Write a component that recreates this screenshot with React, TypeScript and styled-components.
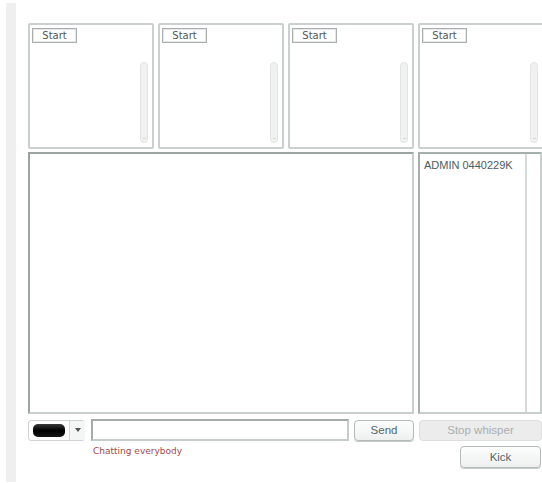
import React from "react";
import styled, { createGlobalStyle } from "styled-components";

const Global = createGlobalStyle`
  html, body { margin: 0; padding: 0; background: #ffffff; overflow: hidden; }
  body { font-family: "Liberation Sans", Arial, sans-serif; }
`;

const Page = styled.div`
  display: flex;
  width: 542px;
  height: 483px;
  overflow: hidden;
`;

const SideStrip = styled.div`
  flex: none;
  width: 10px;
  margin: 3px 0 0 6px;
  height: 479px;
  background: #efefef;
`;

const Main = styled.div`
  flex: none;
  display: flex;
  flex-direction: column;
  padding: 23px 0 0 12px;
  width: 520px;
`;

const CamRow = styled.div`
  display: flex;
  gap: 4px;
`;

const CamPanel = styled.div`
  flex: none;
  box-sizing: border-box;
  width: 126px;
  height: 126px;
  border: 2px solid #c9d0cf;
  border-radius: 2px;
  position: relative;
  background: #fff;
`;

const StartButton = styled.button`
  position: absolute;
  left: 2px;
  top: 3px;
  box-sizing: border-box;
  width: 45px;
  height: 15px;
  padding: 0;
  border: 1px solid #a9aeae;
  box-shadow: inset 0 0 0 1px #e6e6e6;
  background: #fff;
  font-family: "DejaVu Sans", Verdana, sans-serif;
  font-size: 10px;
  color: #555;
  line-height: 13px;
`;

const Track = styled.div`
  position: absolute;
  right: 4px;
  top: 37px;
  width: 8px;
  height: 81px;
  box-sizing: border-box;
  border: 1px solid #e2e4e4;
  border-radius: 4px;
  background: #f1f1f1;
  &::after {
    content: "";
    position: absolute;
    left: 2px;
    bottom: 3px;
    width: 3px;
    height: 1px;
    background: #c9e0b8;
  }
`;

const ChatRow = styled.div`
  display: flex;
  gap: 4px;
  margin-top: 3px;
`;

const ChatBox = styled.div`
  flex: none;
  box-sizing: border-box;
  width: 386px;
  height: 262px;
  border: 2px solid #c8cfcd;
  border-top-color: #9aa5a3;
  border-left-color: #9aa5a3;
  background: #fff;
`;

const UserBox = styled.div`
  flex: none;
  box-sizing: border-box;
  width: 124px;
  height: 262px;
  border: 2px solid #c8cfcd;
  border-top-color: #a5afad;
  border-left-color: #a5afad;
  display: flex;
  background: #fff;
`;

const UserList = styled.div`
  flex: 1;
  padding: 5px 0 0 4px;
  font-size: 11px;
  color: #4c5b60;
`;

const UserTrack = styled.div`
  flex: none;
  width: 13px;
  border-left: 2px solid #d6dbda;
  background: #fff;
`;

const InputRow = styled.div`
  display: flex;
  align-items: center;
  margin-top: 5px;
  height: 22px;
`;

const ColorPicker = styled.div`
  flex: none;
  box-sizing: border-box;
  width: 57px;
  height: 21px;
  border: 1px solid #cfd3d3;
  border-radius: 3px;
  display: flex;
  align-items: center;
  background: #fff;
`;

const Swatch = styled.div`
  flex: none;
  width: 32px;
  height: 13px;
  margin-left: 4px;
  border-radius: 5px;
  background: linear-gradient(#3a3a3a, #000 50%, #151515);
`;

const Arrow = styled.div`
  flex: none;
  margin-left: 4px;
  width: 15px;
  height: 19px;
  border-left: 1px solid #d6d9d9;
  background: #f4f5f5;
  display: flex;
  align-items: center;
  justify-content: center;
  &::before {
    content: "";
    border-left: 3px solid transparent;
    border-right: 3px solid transparent;
    border-top: 4px solid #4a5558;
  }
`;

const TextInput = styled.input`
  flex: none;
  box-sizing: border-box;
  width: 258px;
  height: 22px;
  margin-left: 6px;
  border: 2px solid #c5cccb;
  border-top-color: #a3acab;
  border-left-color: #a3acab;
  background: #fff;
  outline: none;
`;

const Button = styled.button<{ $w: number; $disabled?: boolean }>`
  flex: none;
  box-sizing: border-box;
  width: ${(p) => p.$w}px;
  height: 21px;
  padding: 0;
  border: 1px solid ${(p) => (p.$disabled ? "#dcdfdf" : "#b3bab9")};
  border-radius: 4px;
  background: ${(p) => (p.$disabled ? "#ececec" : "linear-gradient(#fdfdfd, #eef0f0)")};
  box-shadow: ${(p) => (p.$disabled ? "none" : "0 1px 0 #c4cbca")};
  font-family: "Liberation Sans", Arial, sans-serif;
  font-size: 11.5px;
  color: ${(p) => (p.$disabled ? "#a9aeae" : "#55666b")};
`;

const SendButton = styled(Button)`
  margin-left: 5px;
`;

const StopButton = styled(Button)`
  margin-left: 5px;
`;

const FooterRow = styled.div`
  display: flex;
  align-items: flex-start;
  margin-top: 5px;
`;

const Status = styled.div`
  flex: none;
  margin: 0 0 0 65px;
  width: 367px;
  font-family: "DejaVu Sans", Verdana, sans-serif;
  font-size: 9px;
  color: #a14a4a;
`;

const KickButton = styled(Button)`
  height: 22px;
`;

const Camera = () => (
  <CamPanel>
    <StartButton>Start</StartButton>
    <Track />
  </CamPanel>
);

export default function App() {
  return (
    <>
      <Global />
      <Page>
        <SideStrip />
        <Main>
          <CamRow>
            <Camera />
            <Camera />
            <Camera />
            <Camera />
          </CamRow>
          <ChatRow>
            <ChatBox />
            <UserBox>
              <UserList>ADMIN 0440229K</UserList>
              <UserTrack />
            </UserBox>
          </ChatRow>
          <InputRow>
            <ColorPicker>
              <Swatch />
              <Arrow />
            </ColorPicker>
            <TextInput type="text" />
            <SendButton $w={60}>Send</SendButton>
            <StopButton $w={123} $disabled>
              Stop whisper
            </StopButton>
          </InputRow>
          <FooterRow>
            <Status>Chatting everybody</Status>
            <KickButton $w={81}>Kick</KickButton>
          </FooterRow>
        </Main>
      </Page>
    </>
  );
}
